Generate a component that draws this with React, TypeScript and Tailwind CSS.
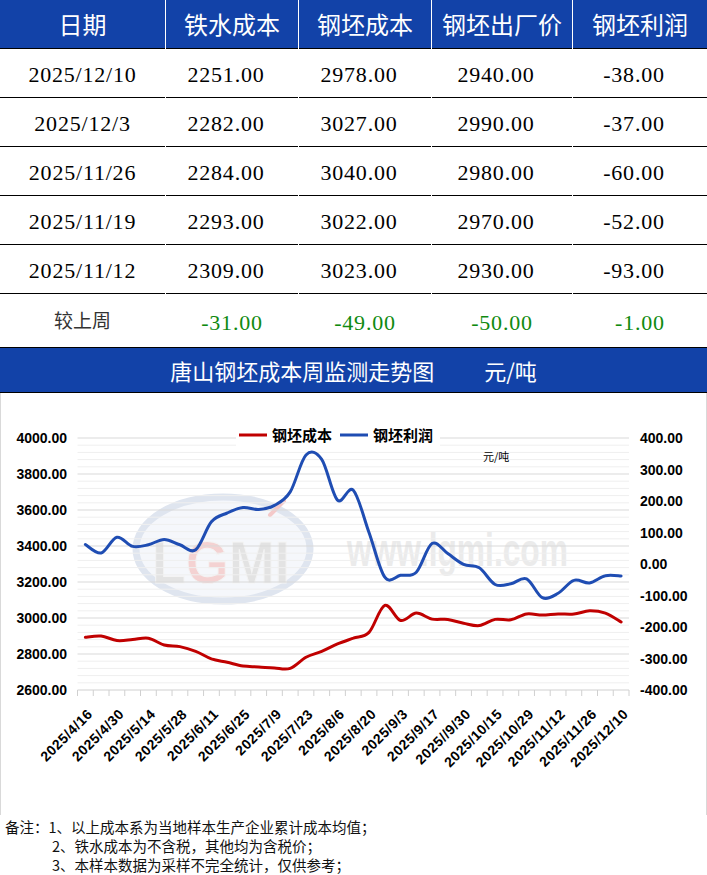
import React from 'react';

const rows = [
  ['2025/12/10', '2251.00', '2978.00', '2940.00', '-38.00'],
  ['2025/12/3', '2282.00', '3027.00', '2990.00', '-37.00'],
  ['2025/11/26', '2284.00', '3040.00', '2980.00', '-60.00'],
  ['2025/11/19', '2293.00', '3022.00', '2970.00', '-52.00'],
  ['2025/11/12', '2309.00', '3023.00', '2930.00', '-93.00'],
];

const diff = ['-31.00', '-49.00', '-50.00', '-1.00'];

const headers = ['日期', '铁水成本', '钢坯成本', '钢坯出厂价', '钢坯利润'];

// weekly data, 2025/4/16 .. 2025/12/10
const cost = [
  2893, 2900, 2875, 2880, 2888, 2850, 2841, 2815, 2773, 2754, 2733, 2728, 2722, 2720, 2782, 2815,
  2856, 2888, 2920, 3070, 2986, 3027, 2994, 2992, 2971, 2958, 2992, 2990, 3023, 3016, 3023, 3022,
  3040, 3027, 2978,
];
const profit = [
  62, 35, 85, 56, 61, 78, 61, 45, 134, 162, 179, 173, 186, 229, 346, 332, 203, 234, 100, -42, -36,
  -26, 65, 33, -1, -12, -65, -63, -47, -107, -93, -52, -60, -37, -38,
];

const dateLabels = [
  '2025/4/16', '2025/4/30', '2025/5/14', '2025/5/28', '2025/6/11', '2025/6/25', '2025/7/9',
  '2025/7/23', '2025/8/6', '2025/8/20', '2025/9/3', '2025/9/17', '2025//9/30', '2025/10/15',
  '2025/10/29', '2025/11/12', '2025/11/26', '2025/12/10',
];

const X0 = 77.5;
const X1 = 629;
const STEP = (X1 - X0) / 35;
const TOP = 45;
const BOTTOM = 297;
const xc = (i: number) => X0 + STEP * (i + 0.5);
const yL = (v: number) => TOP + ((4000 - v) / 1400) * (BOTTOM - TOP);
const yR = (v: number) => TOP + ((400 - v) / 800) * (BOTTOM - TOP);

function smoothPath(pts: [number, number][]) {
  let d = `M${pts[0][0]},${pts[0][1]}`;
  for (let i = 0; i < pts.length - 1; i++) {
    const p0 = pts[i - 1] || pts[i];
    const p1 = pts[i];
    const p2 = pts[i + 1];
    const p3 = pts[i + 2] || p2;
    const c1x = p1[0] + (p2[0] - p0[0]) / 6;
    const c1y = p1[1] + (p2[1] - p0[1]) / 6;
    const c2x = p2[0] - (p3[0] - p1[0]) / 6;
    const c2y = p2[1] - (p3[1] - p1[1]) / 6;
    d += ` C${c1x.toFixed(1)},${c1y.toFixed(1)} ${c2x.toFixed(1)},${c2y.toFixed(1)} ${p2[0].toFixed(1)},${p2[1].toFixed(1)}`;
  }
  return d;
}

const num = { fontFamily: '"Liberation Serif", "Times New Roman", serif' };
const cjk = { fontFamily: '"Noto Sans CJK SC", "Noto Sans", sans-serif' };

function Chart() {
  const axisFont = '"Liberation Sans", Arial, sans-serif';
  const cjkFont = '"Noto Sans CJK SC", "Liberation Sans", sans-serif';
  const grid = Array.from({ length: 35 }, (_, k) => TOP + k * 7.2);

  return (
    <svg width="705" height="422" viewBox="1 0 705 422" className="block">
      {/* watermark logo */}
      <g>
        <ellipse cx="223" cy="156" rx="87" ry="52" fill="#f5f7fb" stroke="#dfe5ef" strokeWidth="7" />
        <g transform="translate(152 190) scale(0.92 1)">
          <text x="0" y="0" fontFamily={axisFont} fontWeight="bold" fontSize="60" fill="#e3e3e3" stroke="#f4f4f4" strokeWidth="1">
            L<tspan fill="#f4d2d2">G</tspan>MI
          </text>
        </g>
        <path d="M270 122 L284 108" stroke="#f4c9c9" strokeWidth="4" strokeLinecap="round" />
        <g transform="translate(347 173) scale(0.69 1)">
          <text x="0" y="0" fontFamily={axisFont} fontWeight="bold" fontSize="46" fill="#ebebeb">
            www.lgmi.com
          </text>
        </g>
      </g>

      {/* grid */}
      {grid.map((y, k) => (
        <line key={k} x1={X0} x2={X1} y1={y} y2={y} stroke={k % 5 === 0 ? '#d9d9d9' : '#efefef'} strokeWidth="1" />
      ))}
      <line x1={X0} x2={X1} y1={BOTTOM} y2={BOTTOM} stroke="#d0d0d0" strokeWidth="1" />
      {Array.from({ length: 36 }, (_, i) => (
        <line key={i} x1={X0 + STEP * i} x2={X0 + STEP * i} y1={BOTTOM} y2={BOTTOM + 6} stroke="#d0d0d0" strokeWidth="1" />
      ))}

      {/* axes labels */}
      {[4000, 3800, 3600, 3400, 3200, 3000, 2800, 2600].map((v) => (
        <text key={v} x="67" y={yL(v) + 5} textAnchor="end" fontFamily={axisFont} fontWeight="bold" fontSize="14" fill="#000">
          {v.toFixed(2)}
        </text>
      ))}
      {[400, 300, 200, 100, 0, -100, -200, -300, -400].map((v) => (
        <text key={v} x="640" y={yR(v) + 5} fontFamily={axisFont} fontWeight="bold" fontSize="14" fill="#000">
          {v.toFixed(2)}
        </text>
      ))}
      {dateLabels.map((t, j) => {
        const x = xc(j * 2) + 8;
        const y = 322;
        return (
          <text key={t} x={x} y={y} textAnchor="end" transform={`rotate(-45 ${x} ${y})`} fontFamily={axisFont} fontWeight="bold" fontSize="14" letterSpacing="0.5" fill="#000">
            {t}
          </text>
        );
      })}

      {/* series */}
      <path d={smoothPath(cost.map((v, i) => [xc(i), yL(v)]))} fill="none" stroke="#c00000" strokeWidth="3" strokeLinejoin="round" strokeLinecap="round" />
      <path d={smoothPath(profit.map((v, i) => [xc(i), yR(v)]))} fill="none" stroke="#1f4db3" strokeWidth="3" strokeLinejoin="round" strokeLinecap="round" />

      {/* legend */}
      <rect x="236" y="31" width="204" height="22" fill="#fff" />
      <line x1="239" x2="267" y1="42" y2="42" stroke="#c00000" strokeWidth="3" />
      <text x="272" y="47.5" fontFamily={cjkFont} fontWeight="bold" fontSize="15" fill="#000">钢坯成本</text>
      <line x1="340" x2="368" y1="42" y2="42" stroke="#1f4db3" strokeWidth="3" />
      <text x="373" y="47.5" fontFamily={cjkFont} fontWeight="bold" fontSize="15" fill="#000">钢坯利润</text>
      <text x="483" y="68" fontFamily={cjkFont} fontSize="11" fill="#000">元/吨</text>
    </svg>
  );
}

export default function App() {
  return (
    <div className="w-[707px] bg-white text-black">
      {/* table */}
      <div className="grid grid-cols-[165px_132px_132px_140px_134px] gap-x-px bg-white">
        {headers.map((h) => (
          <div key={h} className="h-[49px] bg-[#1242a8] border-b border-black flex items-center justify-center text-[24px] text-white" style={cjk}>
            {h}
          </div>
        ))}
        {rows.map((r) =>
          r.map((c, i) => (
            <div
              key={r[0] + i}
              className={`h-[49px] pt-[3px] border-b border-black flex items-center justify-center text-[22px] tracking-[0.8px] ${i === 0 ? '' : 'pr-[12px]'}`}
              style={num}
            >
              {c}
            </div>
          ))
        )}
        <div className="h-[53px] flex items-center justify-center text-[19px] text-[#333]" style={cjk}>
          较上周
        </div>
        {diff.map((d, i) => (
          <div key={i} className="h-[53px] pt-[3px] flex items-center justify-center text-[22px] tracking-[0.8px] text-[#0f8a10]" style={num}>
            {d}
          </div>
        ))}
      </div>

      {/* chart title */}
      <div className="h-[46px] bg-[#1242a8] border-y border-black flex items-center justify-center gap-[50px] text-[22px] text-white" style={cjk}>
        <span>唐山钢坯成本周监测走势图</span>
        <span>元/吨</span>
      </div>

      {/* chart */}
      <div className="h-[422px] border-x border-[#d9d9d9]">
        <Chart />
      </div>

      {/* notes */}
      <div className="pt-[2px] pl-[5px] text-[14.5px] leading-[19px] text-[#111]" style={cjk}>
        <div>备注：1、以上成本系为当地样本生产企业累计成本均值；</div>
        <div className="pl-[47px]">2、铁水成本为不含税，其他均为含税价；</div>
        <div className="pl-[47px]">3、本样本数据为采样不完全统计，仅供参考；</div>
      </div>
    </div>
  );
}
